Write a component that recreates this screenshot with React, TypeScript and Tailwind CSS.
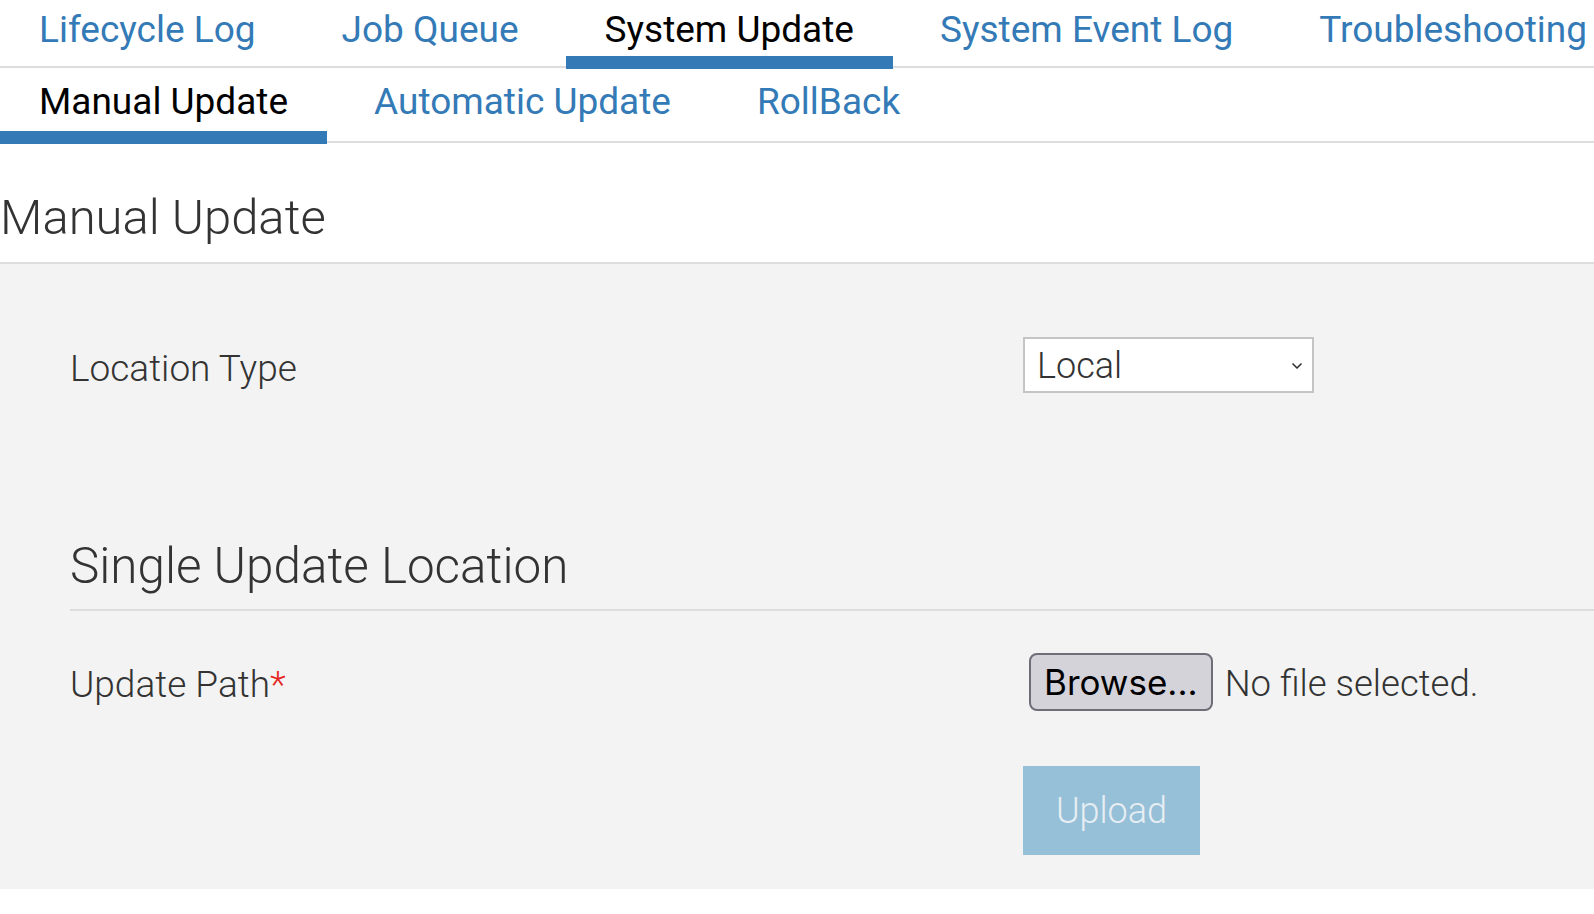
import { ChevronDown } from 'lucide-react';

const TOP_TABS = ['Lifecycle Log', 'Job Queue', 'System Update', 'System Event Log', 'Troubleshooting'];
const SUB_TABS = ['Manual Update', 'Automatic Update', 'RollBack'];

function TabBar({ tabs, active, top }: { tabs: string[]; active: string; top: boolean }) {
  return (
    <div className="flex gap-[8px] border-b-2 border-[#dddddd] whitespace-nowrap">
      {tabs.map((t) => (
        <div
          key={t}
          className={`-mb-[3px] px-[39px] text-[37px] leading-[36px] border-b-[13px] ${
            top ? 'pt-[12px] pb-[8px]' : 'pt-[16px] pb-[11px]'
          } ${t === active ? 'border-[#337ab7] text-black' : 'border-transparent text-[#337ab7]'}`}
        >
          {t}
        </div>
      ))}
    </div>
  );
}

export default function App() {
  return (
    <div className="w-[1594px] h-[914px] overflow-hidden bg-white font-['Roboto',sans-serif] text-[#333]">
      <TabBar tabs={TOP_TABS} active="System Update" top />
      <TabBar tabs={SUB_TABS} active="Manual Update" top={false} />

      <h1 className="pt-[51px] pb-[20px] text-[49px] leading-[48px] font-light border-b-2 border-[#dddddd]">
        Manual Update
      </h1>

      <div className="bg-[#f3f3f3] pl-[70px] pt-[73px] pb-[34px]">
        <div className="flex items-center h-[56px]">
          <label className="w-[953px] text-[37px] leading-[36px] font-light pt-[8px]">Location Type</label>
          <div className="relative w-[291px] h-[56px]">
            <select className="appearance-none w-full h-full bg-white border-2 border-[#c4c4c4] pl-[12px] text-[36px] font-light text-[#333] outline-none">
              <option>Local</option>
            </select>
            <ChevronDown
              className="pointer-events-none absolute right-[8px] top-[21px] w-[18px] h-[16px] text-[#333]"
              strokeWidth={2.5}
            />
          </div>
        </div>

        <h2 className="mt-[149px] pb-[19px] text-[49.4px] leading-[48px] font-light border-b-2 border-[#dddddd]">
          Single Update Location
        </h2>

        <div className="flex items-center mt-[42px] h-[58px]">
          <label className="w-[959px] text-[37px] leading-[36px] font-light pt-[5px]">
            Update Path<span className="text-[#e52521]">*</span>
          </label>
          <button className="h-[58px] px-[13px] rounded-[8px] border-2 border-[#6f6e78] bg-[#d4d3da] text-black text-[35px] font-['Inter',sans-serif] leading-none">
            Browse...
          </button>
          <span className="ml-[12px] text-[36.5px] font-light text-[#333] pt-[4px]">No file selected.</span>
        </div>

        <div className="mt-[55px] ml-[953px]">
          <button className="w-[177px] h-[89px] bg-[#96bfd8] text-[#e6eef3] text-[36px] font-light">Upload</button>
        </div>
      </div>
    </div>
  );
}
